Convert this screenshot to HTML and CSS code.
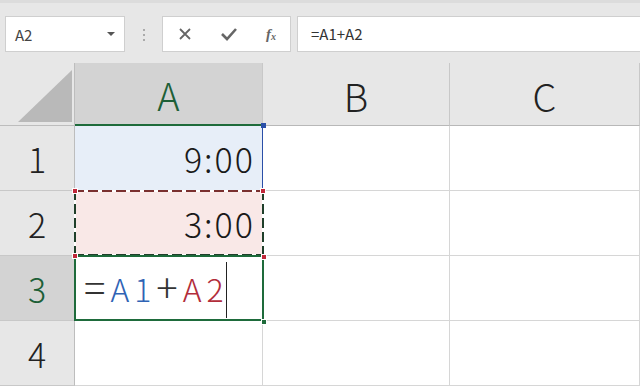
FILE: index.html
```html
<!DOCTYPE html>
<html lang="ja">
<head>
<meta charset="utf-8">
<title>Excel 時刻の足し算</title>
<link rel="stylesheet" href="styles.css">
</head>
<body>

<div class="toolbar">
  <div class="namebox">
    <span>A2</span>
    <svg class="drop" width="10" height="6" viewBox="0 0 10 6"><path d="M1 1h8L5 5z" fill="#555"/></svg>
  </div>
  <div class="grip"><i></i><i></i><i></i></div>
  <div class="fxbox">
    <svg width="14" height="14" viewBox="0 0 14 14"><path d="M2 2l10 10M12 2L2 12" stroke="#666" stroke-width="1.8" fill="none"/></svg>
    <svg width="18" height="14" viewBox="0 0 18 14"><path d="M2 7l5 5L16 2" stroke="#666" stroke-width="2.6" fill="none"/></svg>
    <span class="fx">f<sub>x</sub></span>
  </div>
  <div class="formula">=A1+A2</div>
</div>

<div class="sheet">
  <div class="corner"><div class="tri"></div></div>
  <div class="colhead active">A</div>
  <div class="colhead">B</div>
  <div class="colhead">C</div>

  <div class="rowhead">1</div>
  <div class="cell num ref1">9:00
    <div class="ref-blue"></div>
    <span class="knob blue tr"></span>
  </div>
  <div class="cell"></div>
  <div class="cell"></div>

  <div class="rowhead">2</div>
  <div class="cell num ref2">3:00
    <div class="marquee"></div>
    <span class="knob red tl"></span>
    <span class="knob red tr"></span>
    <span class="knob red bl"></span>
    <span class="knob red br"></span>
  </div>
  <div class="cell"></div>
  <div class="cell"></div>

  <div class="rowhead active">3</div>
  <div class="cell edit"><span class="op">=</span><span class="r1">A1</span><span class="op">+</span><span class="r2">A2</span><span class="caret"></span>
    <div class="sel"></div>
    <span class="knob green br"></span>
  </div>
  <div class="cell"></div>
  <div class="cell"></div>

  <div class="rowhead">4</div>
  <div class="cell"></div>
  <div class="cell"></div>
  <div class="cell"></div>
</div>

</body>
</html>
```

FILE: styles.css
```css
html, body { margin: 0; padding: 0; }

body {
  width: 640px;
  height: 388px;
  overflow: hidden;
  background: #fff;
  font-family: "Noto Sans CJK JP", "Noto Sans", sans-serif;
  font-weight: 300;
  color: #222;
}

/* formula bar */
.toolbar {
  height: 63px;
  box-sizing: border-box;
  padding: 16px 0 0 5px;
  display: flex;
  align-items: flex-start;
  background: #e7e7e7;
  border-top: 3px solid #dcdcdc;
}

.namebox, .fxbox, .formula {
  height: 36px;
  box-sizing: border-box;
  background: #fff;
  border: 1px solid #cfcfcf;
  margin-top: -3px;
}

.namebox {
  width: 120px;
  display: flex;
  align-items: center;
  justify-content: space-between;
  padding: 0 8px 0 9px;
  font-size: 15px;
  font-weight: 400;
  color: #444;
}

.grip {
  width: 37px;
  display: flex;
  flex-direction: column;
  align-items: center;
  gap: 3px;
  margin-top: 10px;
}
.grip i { width: 2px; height: 2px; background: #aaa; display: block; }

.fxbox {
  width: 129px;
  display: flex;
  align-items: center;
  justify-content: space-between;
  padding: 0 14px 0 15px;
}
.fx {
  font-family: "Liberation Serif", serif;
  font-style: italic;
  font-weight: bold;
  font-size: 15px;
  color: #666;
}
.fx sub { font-size: 10px; vertical-align: -1px; }

.formula {
  flex: 1;
  margin-left: 6px;
  border-right: 0;
  padding: 0 0 0 13px;
  font-size: 15px;
  font-weight: 400;
  line-height: 34px;
  color: #333;
}

/* sheet */
.sheet {
  display: grid;
  grid-template-columns: 75px 188px 187px 190px;
  grid-template-rows: 63px repeat(4, 65px);
}

.sheet > div {
  box-sizing: border-box;
  border-right: 1px solid #d6d6d6;
  border-bottom: 1px solid #d6d6d6;
}

.corner {
  background: #e7e7e7;
  position: relative;
  border-right-color: #bdbdbd !important;
  border-bottom-color: #bdbdbd !important;
}
.tri {
  position: absolute;
  left: 18px;
  top: 7px;
  width: 54px;
  height: 52px;
  background: #b9b9b9;
  clip-path: polygon(0 100%, 100% 0, 100% 100%);
}

.colhead {
  background: #e7e7e7;
  border-right-color: #c8c8c8 !important;
  border-bottom-color: #b8b8b8 !important;
  display: flex;
  align-items: center;
  justify-content: center;
  font-size: 38px;
  color: #222;
  padding-top: 2px;
}
.colhead.active {
  background: #d3d3d3;
  color: #1d5f37;
  border-bottom: 2px solid #1e6b3b !important;
}

.rowhead {
  background: #e7e7e7;
  border-right-color: #bdbdbd !important;
  border-bottom-color: #c8c8c8 !important;
  display: flex;
  align-items: center;
  justify-content: center;
  font-size: 34px;
  color: #222;
}
.rowhead.active {
  background: #d3d3d3;
  color: #1d5f37;
}

.cell { position: relative; }

.num {
  display: flex;
  align-items: center;
  justify-content: flex-end;
  padding-right: 7px;
  font-size: 34px;
  letter-spacing: 2px;
  color: #1a1a1a;
}

.ref1 { background: #e7eef8; }
.ref2 { background: #f9e8e7; }

.ref-blue {
  position: absolute;
  top: 0;
  right: -1px;
  bottom: 0;
  width: 1px;
  background: #2a4fa8;
}

.marquee {
  position: absolute;
  inset: -1px -2px -1px -1px;
  background:
    repeating-linear-gradient(90deg, #7a2f2f 0 10px, #fff 10px 14px) top / 100% 2px no-repeat,
    repeating-linear-gradient(90deg, #1f3f2a 0 10px, #fff 10px 14px) bottom / 100% 2px no-repeat,
    repeating-linear-gradient(180deg, #1f3f2a 0 10px, #fff 10px 14px) left / 2px 100% no-repeat,
    repeating-linear-gradient(180deg, #1f3f2a 0 10px, #fff 10px 14px) right / 2px 100% no-repeat;
}

.edit {
  display: flex;
  align-items: center;
  padding-left: 9px;
  font-size: 32px;
  color: #333;
}
.edit .op { font-size: 40px; line-height: 1; padding: 0 5px 4px 0; }
.edit .r1, .edit .r2 { letter-spacing: 5px; }
.edit .r1 { color: #2f63b5; }
.edit .r2 { color: #b22d3a; }
.caret {
  display: block;
  width: 1px;
  height: 56px;
  background: #222;
  margin-left: -3px;
  margin-top: 4px;
}

.sel {
  position: absolute;
  inset: -1px -2px -1px -1px;
  border: 2px solid #1e6b3b;
}

.knob {
  position: absolute;
  width: 5px;
  height: 5px;
  z-index: 2;
}
.knob.blue { background: #2a4fa8; }
.knob.red { background: #c0283a; border: 1px solid #fff; width: 4px; height: 4px; }
.knob.green { background: #1e6b3b; border: 1px solid #fff; width: 4px; height: 4px; }
.tl { left: -3px; top: -3px; }
.tr { right: -4px; top: -3px; }
.bl { left: -3px; bottom: -4px; }
.br { right: -5px; bottom: -5px; }
```
